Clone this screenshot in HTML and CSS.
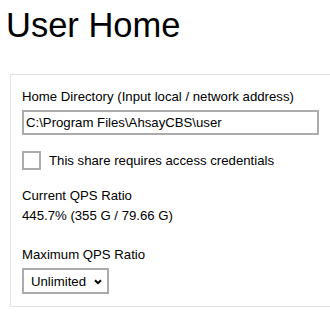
FILE: index.html
```html
<!DOCTYPE html>
<html lang="en">
<head>
<meta charset="utf-8">
<title>User Home</title>
<link rel="stylesheet" href="styles.css">
</head>
<body>
<h1 class="title">User Home</h1>
<div class="panel">
  <label class="field-label" for="homeDir">Home Directory (Input local / network address)</label>
  <input class="text-input" id="homeDir" type="text" value="C:\Program Files\AhsayCBS\user">
  <label class="check-row">
    <input class="check-box" type="checkbox">
    <span>This share requires access credentials</span>
  </label>
  <div class="info-label">Current QPS Ratio</div>
  <div class="info-value">445.7% (355 G / 79.66 G)</div>
  <div class="field-label max-label">Maximum QPS Ratio</div>
  <div class="select-wrap">
    <select class="select">
      <option>Unlimited</option>
    </select>
    <svg class="chevron" width="8" height="6" viewBox="0 0 8 6"><path d="M1 1.2 L4 4.2 L7 1.2" fill="none" stroke="#000" stroke-width="2"/></svg>
  </div>
</div>
</body>
</html>
```
FILE: styles.css
```css
html, body {
  margin: 0;
  padding: 0;
  background: #fff;
  overflow: hidden;
}
body {
  font-family: "Liberation Sans", Arial, sans-serif;
  font-size: 13.2px;
  line-height: 16px;
  color: #000;
}
.title {
  margin: 0;
  padding: 5px 0 0 6px;
  font-weight: normal;
  font-size: 34.5px;
  line-height: 40px;
  color: #000;
}
.panel {
  margin: 29px 0 0 10px;
  width: 297px;
  border: 1px solid #e3e3e3;
  padding: 14px 11px 12px 11px;
}
.field-label {
  display: block;
}
.text-input {
  display: block;
  box-sizing: border-box;
  width: 297px;
  height: 25px;
  margin: 5px 0 0 0;
  border: 2px solid #ababab;
  padding: 0 2px;
  font-family: inherit;
  font-size: 13.2px;
  color: #000;
  outline: none;
}
.check-row {
  display: flex;
  align-items: center;
  gap: 8px;
  margin-top: 16px;
}
.check-box {
  appearance: none;
  -webkit-appearance: none;
  box-sizing: border-box;
  width: 19px;
  height: 19px;
  margin: 0;
  border: 2px solid #ababab;
  background: #fff;
}
.info-label {
  margin-top: 18px;
}
.info-value {
  margin-top: 4px;
}
.max-label {
  margin-top: 23px;
}
.select-wrap {
  position: relative;
  display: inline-block;
  margin-top: 5px;
}
.select {
  appearance: none;
  -webkit-appearance: none;
  box-sizing: border-box;
  width: 87px;
  height: 26px;
  border: 2px solid #ababab;
  border-radius: 0;
  background: #fff;
  padding: 0 0 0 7px;
  font-family: inherit;
  font-size: 13.2px;
  color: #000;
}
.chevron {
  position: absolute;
  left: 72px;
  top: 11px;
}
```
